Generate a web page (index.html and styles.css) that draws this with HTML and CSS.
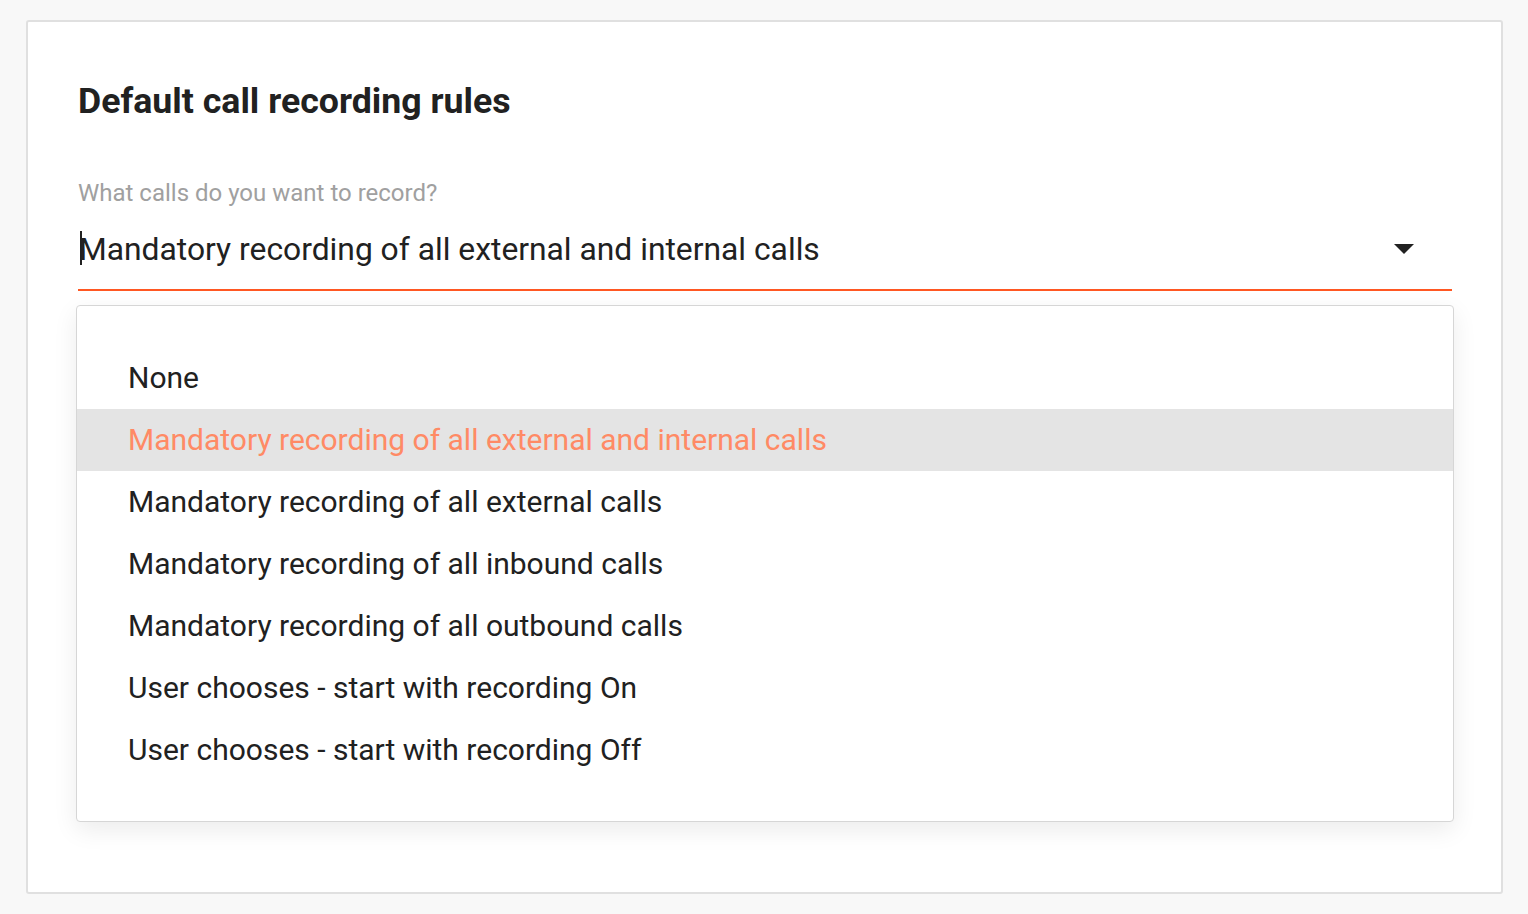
FILE: index.html
```html
<!DOCTYPE html>
<html>
<head>
<meta charset="utf-8">
<link rel="stylesheet" href="styles.css">
</head>
<body>
<div class="card">
  <h1 class="title">Default call recording rules</h1>
  <div class="field">
    <div class="label">What calls do you want to record?</div>
    <div class="control">
      <span class="caret"></span><span class="value">Mandatory recording of all external and internal calls</span>
      <svg class="arrow" width="20" height="10" viewBox="0 0 20 10"><path d="M0 0 L20 0 L10 10 Z" fill="#212121"/></svg>
    </div>
    <ul class="menu">
      <li class="item">None</li>
      <li class="item selected">Mandatory recording of all external and internal calls</li>
      <li class="item">Mandatory recording of all external calls</li>
      <li class="item">Mandatory recording of all inbound calls</li>
      <li class="item">Mandatory recording of all outbound calls</li>
      <li class="item">User chooses - start with recording On</li>
      <li class="item">User chooses - start with recording Off</li>
    </ul>
  </div>
</div>
</body>
</html>
```
FILE: styles.css
```css
html, body {
  margin: 0;
  padding: 0;
}
body {
  background: #f8f8f8;
  font-family: Roboto, "Noto Sans", Arial, sans-serif;
  color: #212121;
  padding: 20px 25px 20px 26px;
}
.card {
  box-sizing: border-box;
  height: 874px;
  background: #fff;
  border: 2px solid #e0e0e0;
  border-radius: 3px;
  padding: 57px 49px 0 50px;
}
.title {
  margin: 0;
  font-size: 35.7px;
  line-height: 44px;
  font-weight: 700;
  color: #212121;
}
.field {
  position: relative;
  margin-top: 56px;
}
.label {
  font-size: 24px;
  line-height: 28px;
  color: #a0a0a0;
}
.control {
  display: flex;
  align-items: center;
  margin-top: 22px;
  padding-bottom: 20px;
  border-bottom: 2px solid #ff5722;
  height: 40px;
}
.caret {
  align-self: flex-start;
  width: 2px;
  height: 34px;
  margin-top: 2px;
  background: #212121;
  margin-left: 2px;
  margin-right: -3px;
}
.value {
  flex: 1;
  font-size: 31.8px;
  line-height: 40px;
  color: #212121;
}
.arrow {
  margin-right: 38px;
  margin-top: -1px;
}
.menu {
  position: absolute;
  left: -2px;
  right: -2px;
  top: calc(100% + 14px);
  margin: 0;
  list-style: none;
  padding: 41px 0 40px;
  background: #fff;
  border: 1px solid #d6d6d6;
  border-radius: 4px;
  box-shadow: 0 8px 24px rgba(0,0,0,0.08);
}
.item {
  height: 62px;
  line-height: 62px;
  padding-left: 51px;
  font-size: 30px;
  color: #212121;
}
.item.selected {
  background: #e4e4e4;
  color: #ff8a65;
}
```
